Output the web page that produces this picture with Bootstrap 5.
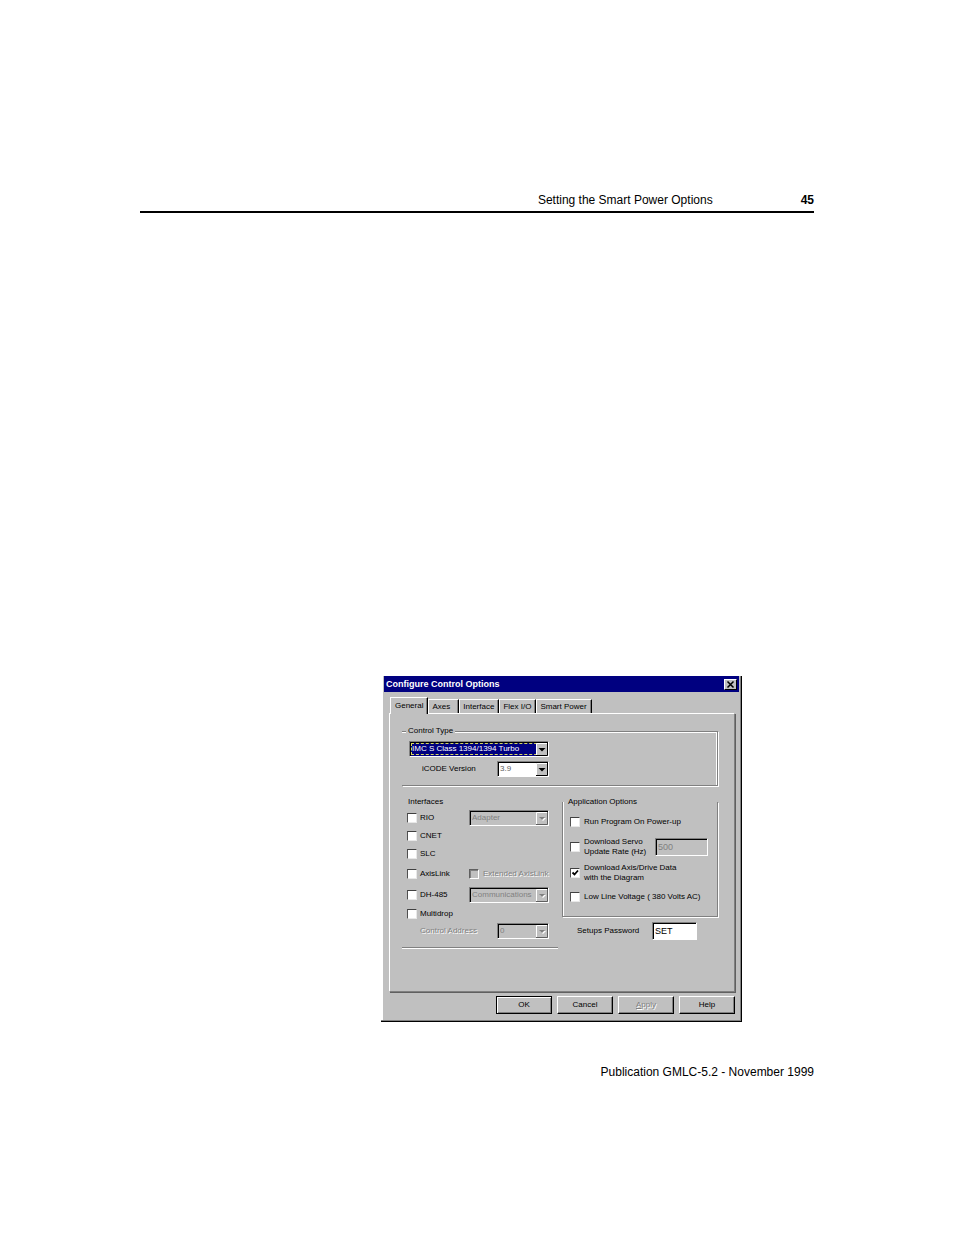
<!DOCTYPE html>
<html lang="en">
<head>
<meta charset="utf-8">
<meta name="viewport" content="width=device-width, initial-scale=1">
<title>Setting the Smart Power Options</title>
<link href="https://cdn.jsdelivr.net/npm/bootstrap@5.3.0/dist/css/bootstrap.min.css" rel="stylesheet">
<style>
:root { --face:#c0c0c0; --shade:#808080; --navy:#000080; }
body { background:#fff; color:#000; font-family:"Liberation Sans",Arial,sans-serif; font-size:12px; line-height:16px; }
.sheet { max-width:674px; }
.sheet-head { padding-top:192px; border-bottom:2px solid #000; }
.sheet-head p { margin:0 88px 3px 0; }
.sheet-body { padding-top:463px; }
.sheet-foot { padding:42px 0 154px; }

.dialog-win { width:100%; max-width:361px; background:var(--face); border:solid #000; border-width:0 1px 1px 0; box-shadow:inset -1px -1px var(--shade), inset 2px 0 #fff; font-size:8px; line-height:10px; padding:0 6px 7px 8px; margin-right:72px; }
.dialog-title { background:var(--navy); color:#fff; height:16px; margin:0 -4px 5px -5px; padding:0 2px; font-size:9px; font-weight:700; line-height:16px; }
.close-btn { width:13px; height:11px; padding:0; border:1px solid; border-color:#fff #000 #000 #fff; border-radius:0; background:var(--face); line-height:0; }
.close-btn svg { display:block; margin:auto; }

.tab-row { height:16px; padding-left:1px; }
.tab-row button { height:14px; padding:0 4px 0 3px; border:solid; border-width:1px 1px 0 1px; border-color:#fff #000 #fff #fff; border-radius:0; background:var(--face); color:#000; line-height:13px; box-shadow:inset -1px 0 var(--shade); white-space:nowrap; }
.tab-row button.active { height:17px; padding:0 4px; line-height:14px; margin-bottom:-1px; z-index:1; }
.tab-panel { border:1px solid; border-color:#fff var(--shade) var(--shade) #fff; box-shadow:1px 1px #606060; padding:12px 16px 43px 12px; margin-bottom:4px; }

fieldset { position:relative; }
legend { float:none; width:auto; font-size:8px; line-height:10px; margin:0; padding:0 2px; }
.group-type { margin-bottom:11px; padding-left:7px; height:60px; }
.group-type::before { content:""; position:absolute; inset:5px 0 0 0; border:solid var(--shade); border-width:1px 1px 1px 0; box-shadow:1px 1px #fff, inset -1px 1px #fff; pointer-events:none; }
.group-type legend { position:absolute; top:0; left:4px; background:var(--face); }
.type-grid { width:140px; row-gap:4px; padding-top:15px; }
.type-grid label { padding-left:13px; }
.groups { display:grid; grid-template-columns:minmax(0,1fr) minmax(0,1fr); column-gap:4px; }
.group-if { border-bottom:1px solid var(--shade); box-shadow:0 1px #fff; height:151px; }
.group-if legend { padding-bottom:2px; line-height:10px; }
.group-app { height:120px; }
.group-app legend { padding-bottom:1px; }
.group-app::before { content:""; position:absolute; inset:-6px 0 0 0; border:solid var(--shade); border-width:0 1px 1px 1px; box-shadow:1px 1px #fff, inset 1px 0 #fff; pointer-events:none; }

.option-line { display:grid; grid-template-columns:10px 46px 80px; column-gap:3px; align-items:center; padding-left:5px; }
.app-line { display:grid; grid-template-columns:10px auto 1fr; column-gap:4px; align-items:center; padding-left:8px; }
.app-line label, .option-line label, .wide-label { white-space:nowrap; }
.row-18 { height:18px; }
.row-21 { height:21px; }
.row-24 { height:24px; }
.row-27 { height:27px; }
.address-line { padding-left:18px; width:147px; height:16px; }
.password-line { padding:5px 21px 0 15px; }

.tick { appearance:none; flex:none; width:10px; height:10px; margin:0; background:#fff; border:1px solid; border-color:#404040 #e8e8e8 #e8e8e8 #505050; display:block; }
.tick:disabled { background:var(--face); border-color:#606060 #fff #fff #606060; box-shadow:inset 1px 1px var(--shade); }
.tick-wrap { position:relative; }
.tick-wrap svg { position:absolute; inset:0; pointer-events:none; visibility:hidden; }
.tick:checked + svg { visibility:visible; }
.dimmed { color:var(--shade); text-shadow:1px 1px #fff; }

.combo { position:relative; height:16px; }
.combo select { appearance:none; display:block; width:100%; height:16px; padding:0 13px 0 2px; border:1px solid; border-color:var(--shade) #fff #fff var(--shade); border-radius:0; box-shadow:inset 1px 1px #000; background:#fff; color:#606060; font-size:8px; line-height:14px; opacity:1; }
.combo select:disabled { background:var(--face); color:var(--shade); }
.combo svg { position:absolute; right:1px; top:2px; width:12px; height:13px; pointer-events:none; }
.combo.chosen select { background:var(--navy); color:#fff; outline:1px dashed #d8d860; outline-offset:-3px; }
.short-combo { width:52px; }
.field { display:block; padding:0 2px; border:1px solid; border-color:var(--shade) #fff #fff var(--shade); border-radius:0; box-shadow:inset 1px 1px #000; height:18px; line-height:14px; font-size:9px; background:#fff; color:#000; }
.field:disabled { background:var(--face); color:var(--shade); }
.rate-field { width:53px; justify-self:end; margin-right:10px; }
.pw-field { width:45px; }
.push-row { gap:5px; }
.push { height:18px; padding:0; flex:0 1 56px; border:1px solid; border-color:#fff #000 #000 #fff; box-shadow:inset -1px -1px var(--shade); border-radius:0; background:var(--face); color:#000; line-height:14px; }
.push.main-push { border-color:#000; box-shadow:inset 1px 1px #fff, inset -1px -1px var(--shade); }
.push.dimmed { color:var(--shade); }
</style>
</head>
<body>
<svg class="d-none" aria-hidden="true">
  <symbol id="drop" viewBox="0 0 12 13"><path fill="#c0c0c0" d="M0 0h12v13H0z"/><path d="M.5 12V.5H11" fill="none" stroke="#fff"/><path d="M0 12.500h11.500V0" fill="none" stroke="#000"/><path d="M2.500 5h7L6 8.500z"/></symbol>
  <symbol id="drop-off" viewBox="0 0 12 13"><path fill="#c0c0c0" d="M0 0h12v13H0z"/><path d="M.5 12V.5H11" fill="none" stroke="#fff"/><path d="M0 12.500h11.500V0" fill="none" stroke="#606060"/><path d="M4 6h6L7 9z" fill="#fff"/><path d="M3 5h6L6 8z" fill="#808080"/></symbol>
</svg>
<div class="sheet mx-auto">
  <header class="sheet-head d-flex justify-content-end">
    <p>Setting the Smart Power Options</p><strong>45</strong>
  </header>
  <main class="sheet-body d-flex justify-content-end">
    <form class="dialog-win">
      <div class="dialog-title d-flex align-items-center justify-content-between">
        <span>Configure Control Options</span>
        <button type="button" class="close-btn" aria-label="Close"><svg width="9" height="9" viewBox="0 0 9 9"><path d="M1.500 1.500 7.500 7.500M7.500 1.500 1.500 7.500" stroke="#000" stroke-width="1.500"/></svg></button>
      </div>
      <div class="tab-row d-flex align-items-end" role="tablist">
        <button type="button" role="tab" class="active" aria-selected="true">General</button>
        <button type="button" role="tab" class="pe-2">Axes</button>
        <button type="button" role="tab">Interface</button>
        <button type="button" role="tab">Flex I/O</button>
        <button type="button" role="tab">Smart Power</button>
      </div>
      <div class="tab-panel">
        <fieldset class="group-type">
          <legend>Control Type</legend>
          <div class="d-grid type-grid">
            <div class="combo chosen"><select aria-label="Control Type"><option>IMC S Class 1394/1394 Turbo</option></select><svg><use href="#drop"/></svg></div>
            <div class="d-flex align-items-center justify-content-between">
              <label for="ver" class="wide-label">iCODE Version</label>
              <div class="combo short-combo"><select id="ver"><option>3.9</option></select><svg><use href="#drop"/></svg></div>
            </div>
          </div>
        </fieldset>
        <div class="groups">
          <fieldset class="group-if">
            <legend class="ms-1">Interfaces</legend>
            <div class="option-line row-18"><input class="tick" type="checkbox" id="rio"><label for="rio">RIO</label>
              <div class="combo"><select disabled aria-label="RIO mode"><option>Adapter</option></select><svg><use href="#drop-off"/></svg></div></div>
            <div class="option-line row-18"><input class="tick" type="checkbox" id="cnet"><label for="cnet">CNET</label></div>
            <div class="option-line row-18"><input class="tick" type="checkbox" id="slc"><label for="slc">SLC</label></div>
            <div class="option-line row-21"><input class="tick" type="checkbox" id="axis"><label for="axis">AxisLink</label>
              <div class="d-flex align-items-center gap-1"><input class="tick" type="checkbox" id="ext" disabled><label for="ext" class="dimmed">Extended AxisLink</label></div></div>
            <div class="option-line row-21"><input class="tick" type="checkbox" id="dh"><label for="dh">DH-485</label>
              <div class="combo"><select disabled aria-label="DH-485 mode"><option>Communications</option></select><svg><use href="#drop-off"/></svg></div></div>
            <div class="option-line row-18"><input class="tick" type="checkbox" id="multi"><label for="multi">Multidrop</label></div>
            <div class="address-line d-flex align-items-center justify-content-between">
              <label for="addr" class="wide-label dimmed">Control Address</label>
              <div class="combo short-combo"><select id="addr" disabled><option>0</option></select><svg><use href="#drop-off"/></svg></div>
            </div>
          </fieldset>
          <div>
            <fieldset class="group-app">
              <legend class="ms-1">Application Options</legend>
              <div class="app-line row-27"><input class="tick" type="checkbox" id="run"><label for="run">Run Program On Power-up</label></div>
              <div class="app-line row-24"><input class="tick" type="checkbox" id="servo"><label for="servo">Download Servo<br>Update Rate (Hz)</label>
                <input class="field rate-field" type="text" value="500" disabled aria-label="Update Rate (Hz)"></div>
              <div class="app-line row-27"><div class="tick-wrap"><input class="tick" type="checkbox" id="drive" checked><svg width="10" height="10" viewBox="0 0 10 10"><path d="M2.500 4.500 4.500 6.500 8 2.500" fill="none" stroke="#000" stroke-width="1.800"/></svg></div><label for="drive">Download Axis/Drive Data<br>with the Diagram</label></div>
              <div class="app-line row-21"><input class="tick" type="checkbox" id="low"><label for="low">Low Line Voltage ( 380 Volts AC)</label></div>
            </fieldset>
            <div class="password-line d-flex align-items-center justify-content-between">
              <label for="pw">Setups Password</label>
              <input class="field pw-field" type="text" id="pw" value="SET">
            </div>
          </div>
        </div>
      </div>
      <div class="push-row d-flex justify-content-end">
        <button type="button" class="push main-push">OK</button>
        <button type="button" class="push">Cancel</button>
        <button type="button" class="push dimmed" disabled><u>A</u>pply</button>
        <button type="button" class="push">Help</button>
      </div>
    </form>
  </main>
  <footer class="sheet-foot text-end">Publication GMLC-5.2 - November 1999</footer>
</div>
<script src="https://cdn.jsdelivr.net/npm/bootstrap@5.3.0/dist/js/bootstrap.bundle.min.js"></script>
</body>
</html>
